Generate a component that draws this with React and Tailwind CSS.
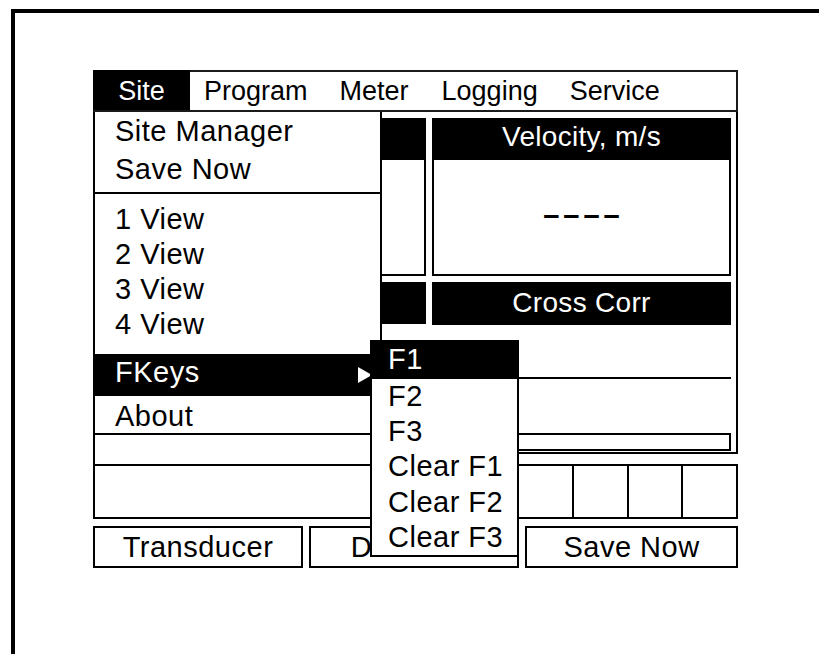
import React from 'react';

// Site menu open, FKeys submenu open
const SITE_ITEMS_TOP = ['Site Manager', 'Save Now'];
const VIEW_ITEMS = ['1 View', '2 View', '3 View', '4 View'];
const FKEY_ITEMS = ['F2', 'F3', 'Clear F1', 'Clear F2', 'Clear F3'];
const MENU_BAR = [
  { label: 'Program', gap: 'ml-[14px]' },
  { label: 'Meter', gap: 'ml-[32px]' },
  { label: 'Logging', gap: 'ml-[33px]' },
  { label: 'Service', gap: 'ml-[32px]' }
];

const Panel = ({ title, children, bodyClass }) => (
  <div className="flex flex-col">
    <div className="h-[42px] bg-black text-white text-center text-[28px] tracking-[0.3px] leading-[38px]">
      {title}
    </div>
    <div className={bodyClass}>{children}</div>
  </div>
);

const SiteMenu = () => (
  <div className="absolute left-0 top-[42px] w-[289px] bg-white border-l-2 border-r-2 border-b-2 border-black text-[29px] tracking-[0.5px]">
    <div className="pb-[4px] border-b-2 border-black">
      {SITE_ITEMS_TOP.map((item) => (
        <div key={item} className="h-[38px] leading-[38px] pl-[20px]">{item}</div>
      ))}
    </div>
    <div className="pt-[8px]">
      {VIEW_ITEMS.map((item) => (
        <div key={item} className="h-[35px] leading-[35px] pl-[20px]">{item}</div>
      ))}
    </div>
    {/* FKeys sélectionné */}
    <div className="relative mt-[12px] h-[42px] leading-[37px] pl-[20px] bg-black text-white">
      FKeys
      <svg className="absolute left-[263px] top-[13px]" width="14" height="16" viewBox="0 0 14 16">
        <path d="M0 0 L14 8 L0 16 Z" fill="white" />
      </svg>
    </div>
    <div className="h-[37px] leading-[40px] pl-[20px]">About</div>
  </div>
);

const FKeysMenu = () => (
  <div className="absolute left-[277px] top-[270px] w-[149px] bg-white border-l-2 border-r-2 border-b-2 border-black text-[29px] tracking-[0.5px]">
    <div className="h-[39px] leading-[39px] -mx-[2px] pl-[18px] bg-black text-white">F1</div>
    {FKEY_ITEMS.map((item) => (
      <div key={item} className="h-[35.2px] leading-[35px] pl-[16px]">{item}</div>
    ))}
  </div>
);

export default function App() {
  return (
    <div className="w-[819px] h-[654px] bg-white overflow-hidden pt-[9px] pl-[11px] font-['Liberation_Sans',Arial,Helvetica,sans-serif] text-black">
      <div className="h-full border-l-4 border-t-4 border-black pl-[78px] pt-[57px]">
        <div className="relative w-[645px]">
          {/* barre de menu */}
          <div className="flex h-[42px] border-t-2 border-r-2 border-b-2 border-[#1a1a1a] text-[27px] leading-[38px]">
            <div className="w-[97px] -mt-[2px] h-[40px] bg-black text-white text-center leading-[42px]">Site</div>
            {MENU_BAR.map((m) => (
              <div key={m.label} className={m.gap}>{m.label}</div>
            ))}
          </div>

          {/* zone principale */}
          <div className="h-[342px] border-l-2 border-r-2 border-black pt-[6px]">
            <div className="flex gap-[6px] px-[5px]">
              <div className="w-[326px] flex flex-col gap-[6px]">
                <Panel title="" bodyClass="h-[116px] border-l-2 border-r-2 border-b-2 border-black" />
                <Panel title="" bodyClass="h-[54px] border-b-2 border-black" />
              </div>
              <div className="w-[299px] flex flex-col gap-[6px]">
                <Panel
                  title="Velocity, m/s"
                  bodyClass="h-[116px] border-l-2 border-r-2 border-b-2 border-black flex items-center justify-center pb-[4px]"
                >
                  <span className="text-[29px] font-bold leading-[29px] tracking-[4px] pl-[4px]">––––</span>
                </Panel>
                <div className="flex flex-col">
                  <div className="h-[43px] bg-black text-white text-center text-[28px] tracking-[0.3px] leading-[42px]">
                    Cross Corr
                  </div>
                  <div className="h-[54px] border-b-2 border-black" />
                </div>
              </div>
            </div>
            <div className="mt-[54px] ml-[284px] mr-[5px] h-[18px] border-2 border-black" />
            <div className="mt-[1px] ml-[284px] h-[2px] bg-black" />
          </div>
          <div className="h-[10px] border-l-2 border-black" />

          {/* rangée de cellules */}
          <div className="flex h-[55px] border-2 border-black">
            <div className="flex-1" />
            <div className="w-[55px] border-l-2 border-black" />
            <div className="w-[54px] border-l-2 border-black" />
            <div className="w-[55px] border-l-2 border-black" />
          </div>

          {/* touches de fonction */}
          <div className="flex gap-[6px] mt-[7px] text-[29px] tracking-[0.5px]">
            <div className="w-[210px] h-[42px] border-2 border-black text-center leading-[38px]">Transducer</div>
            <div className="w-[210px] h-[42px] border-2 border-black text-center leading-[38px] pr-[30px]">Delta T</div>
            <div className="w-[213px] h-[42px] border-2 border-black text-center leading-[38px]">Save Now</div>
          </div>

          <SiteMenu />
          <FKeysMenu />
        </div>
      </div>
    </div>
  );
}
